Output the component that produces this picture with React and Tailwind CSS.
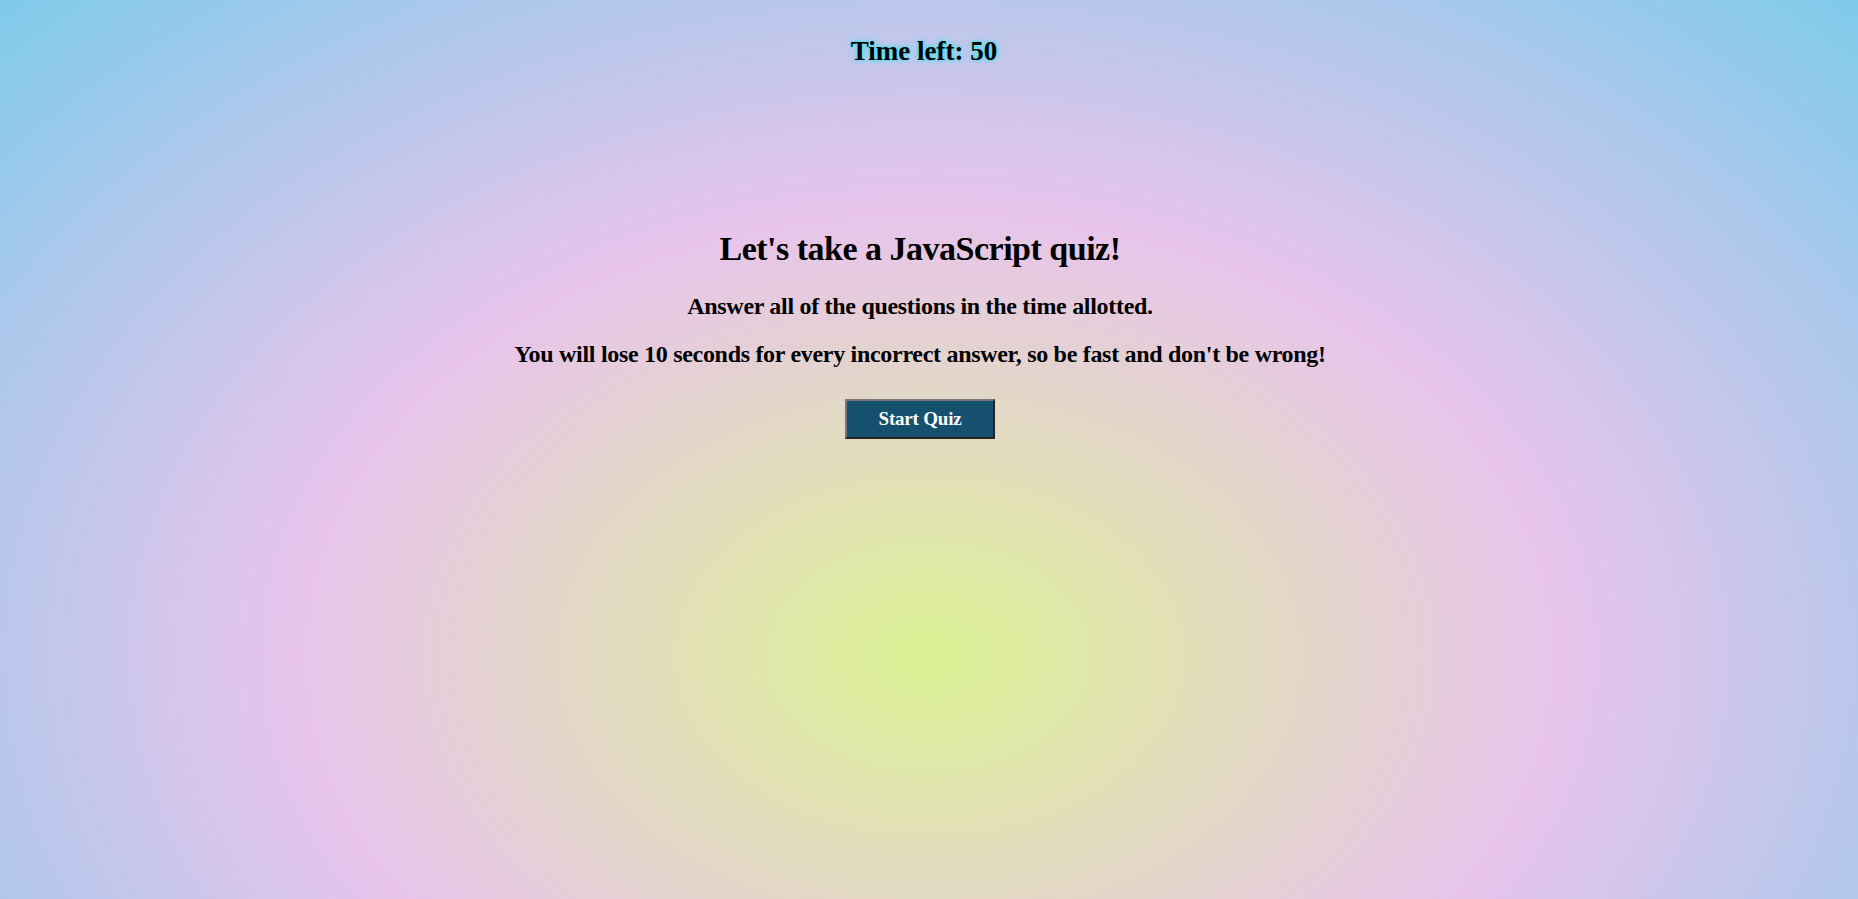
import React from 'react';

const App = () => {
  const timeLeft = 50;

  return (
    <div className="min-h-screen w-full bg-[radial-gradient(ellipse_at_50%_73%,#dcf293_0%,#e8c4ec_48%,#7ecbea_100%)] font-['Liberation_Serif',serif] font-bold text-black">
      {/* Timer */}
      <header className="flex justify-center pt-[34px] pr-[10px]">
        <h2 className="text-[27px] leading-[34px] [text-shadow:0_0_3px_#2ee6f5,0_0_6px_#2ee6f5]">
          Time left: {timeLeft}
        </h2>
      </header>

      {/* Intro */}
      <main className="flex flex-col items-center pt-[159px] pr-[18px] text-center">
        <h1 className="text-[34px] leading-[44px] tracking-[-0.5px]">Let's take a JavaScript quiz!</h1>
        <p className="mt-[20px] text-[24px] leading-[30px] tracking-[-0.3px]">
          Answer all of the questions in the time allotted.
        </p>
        <p className="mt-[18px] text-[24px] leading-[30px] tracking-[-0.3px]">
          You will lose 10 seconds for every incorrect answer, so be fast and don't be wrong!
        </p>
        <button className="mt-[30px] h-[40px] w-[150px] border-2 border-t-[#777] border-l-[#777] border-b-[#222] border-r-[#222] bg-[#15506e] text-[19px] tracking-[-0.2px] text-white">
          Start Quiz
        </button>
      </main>
    </div>
  );
};

export default App;
